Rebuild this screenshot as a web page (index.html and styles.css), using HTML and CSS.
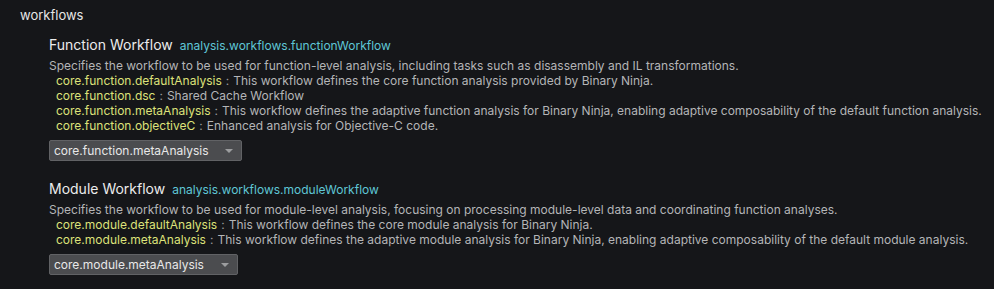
FILE: index.html
```html
<!DOCTYPE html>
<html lang="en">
<head>
    <meta charset="UTF-8">
    <meta name="viewport" content="width=device-width, initial-scale=1.0">
    <title>Settings</title>
    <link rel="stylesheet" href="styles.css">
</head>
<body>
    <div class="group-title">workflows</div>

    <div class="setting">
        <div class="setting-head">
            <span class="setting-name">Function Workflow</span>
            <span class="setting-key">analysis.workflows.functionWorkflow</span>
        </div>
        <div class="setting-desc">Specifies the workflow to be used for function-level analysis, including tasks such as disassembly and IL transformations.</div>
        <ul class="enum-list">
            <li><span class="enum-key">core.function.defaultAnalysis</span><span class="sep">:</span>This workflow defines the core function analysis provided by Binary Ninja.</li>
            <li><span class="enum-key">core.function.dsc</span><span class="sep">:</span>Shared Cache Workflow</li>
            <li><span class="enum-key">core.function.metaAnalysis</span><span class="sep">:</span>This workflow defines the adaptive function analysis for Binary Ninja, enabling adaptive composability of the default function analysis.</li>
            <li><span class="enum-key">core.function.objectiveC</span><span class="sep">:</span>Enhanced analysis for Objective-C code.</li>
        </ul>
        <div class="select select-fn">
            <span>core.function.metaAnalysis</span>
            <i class="arrow"></i>
        </div>
    </div>

    <div class="setting">
        <div class="setting-head">
            <span class="setting-name">Module Workflow</span>
            <span class="setting-key">analysis.workflows.moduleWorkflow</span>
        </div>
        <div class="setting-desc">Specifies the workflow to be used for module-level analysis, focusing on processing module-level data and coordinating function analyses.</div>
        <ul class="enum-list">
            <li><span class="enum-key">core.module.defaultAnalysis</span><span class="sep">:</span>This workflow defines the core module analysis for Binary Ninja.</li>
            <li><span class="enum-key">core.module.metaAnalysis</span><span class="sep">:</span>This workflow defines the adaptive module analysis for Binary Ninja, enabling adaptive composability of the default module analysis.</li>
        </ul>
        <div class="select select-mod">
            <span>core.module.metaAnalysis</span>
            <i class="arrow"></i>
        </div>
    </div>
</body>
</html>
```

FILE: styles.css
```css
* {
    padding: 0;
    margin: 0;
}

body {
    background: #151619;
    font-family: Inter, "Noto Sans", sans-serif;
    color: #b4b5b7;
    width: 994px;
    height: 289px;
    overflow: hidden;
}

.group-title {
    padding: 6px 0 0 20px;
    height: 18px;
    line-height: 18px;
    font-size: 13px;
    color: #e6e6e6;
}

.setting {
    margin-left: 49px;
    padding-top: 11px;
}

.setting + .setting {
    padding-top: 18px;
}

.setting-head {
    display: flex;
    align-items: baseline;
    gap: 7px;
    height: 20px;
    line-height: 20px;
}

.setting-name {
    font-size: 14px;
    color: #ececec;
}

.setting-key {
    font-size: 12px;
    color: #5fc6d6;
}

.setting-desc {
    margin-top: 3px;
    font-size: 12px;
    line-height: 15px;
}

.enum-list {
    list-style: none;
    padding-left: 7px;
    font-size: 12px;
    line-height: 15px;
}

.enum-list li {
    white-space: nowrap;
}

.enum-key {
    color: #dde27a;
}

.sep {
    color: #9a9b9d;
    margin: 0 4px 0 4px;
}

.select {
    display: flex;
    align-items: center;
    justify-content: space-between;
    margin-top: 7px;
    height: 19px;
    padding: 0 8px 0 4px;
    background: #4b4c4f;
    border: 1px solid #616265;
    border-radius: 2px;
    font-size: 12px;
    color: #e8e8e8;
}

.select-fn {
    width: 179px;
}

.select-mod {
    width: 175px;
}

.arrow {
    width: 0;
    height: 0;
    border-left: 4px solid transparent;
    border-right: 4px solid transparent;
    border-top: 4px solid #9c9d9f;
}
```
